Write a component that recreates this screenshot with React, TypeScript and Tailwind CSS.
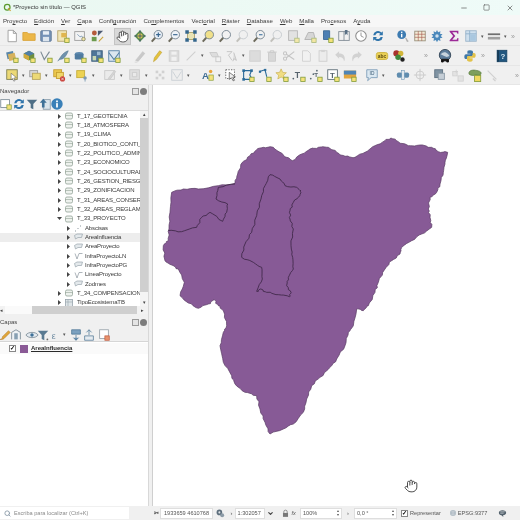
import { Hand, Minus, Square, X, Search, ChevronDown } from 'lucide-react'
import type { ReactNode } from 'react'

const font = "font-['Liberation_Sans',Arial,sans-serif]"

const badge = <rect x="10" y="10.5" width="5" height="5" fill="#f5e27a" stroke="#7f9a3a" strokeWidth=".9" />
const mag = (fill: string, inner?: ReactNode) => (
  <>
    <path d="M6 10 2 14.5" stroke="#6d6a5c" strokeWidth="2.2" />
    <circle cx="9.5" cy="6.5" r="4.8" fill={fill} stroke="#6f7f8c" strokeWidth="1" />
    {inner}
  </>
)

const icons: Record<string, ReactNode> = {
  page: <path d="M3.5 1.5h6l3.5 3.5v9.5h-9.5zM9.5 1.5V5H13" fill="#fff" stroke="#9a9a9a" />,
  open: <path d="M1 13V4h5l1.5 1.5H15V13z" fill="#ecb748" stroke="#d9a43a" />,
  save: (
    <>
      <rect x="2" y="2" width="12" height="12" rx="1" fill="#7693b8" stroke="#5f7796" />
      <rect x="4.5" y="2.5" width="7" height="4" fill="#e8eef5" />
      <rect x="4.5" y="9" width="7" height="5" fill="#dde5ee" />
    </>
  ),
  template: (
    <>
      <rect x="2" y="2" width="10" height="12" fill="#f1e6b8" stroke="#b5a36a" />
      <rect x="6" y="4.5" width="6" height="5" fill="#e0b64f" />
      {badge}
    </>
  ),
  layouts: (
    <>
      <rect x="2" y="3" width="11" height="10" fill="#f3f3f3" stroke="#9b9b9b" />
      <path d="M5 6l3 3 2-1 3 5" stroke="#7e9ab6" fill="none" />
      <circle cx="12" cy="11.5" r="2" fill="#f3e6a5" stroke="#8d8d70" />
    </>
  ),
  styles: (
    <>
      <circle cx="5" cy="4.5" r="2.8" fill="#b45a3c" />
      <rect x="2" y="9" width="5.5" height="5" fill="#6c9a4e" />
      <path d="M9 2h6L9 8z" fill="#4b5a72" />
      <path d="M9.5 14 14.5 8.5l1 1-5 5z" fill="#c8a33c" />
    </>
  ),
  panSel: (
    <>
      <path d="M8 1.5 14.5 8 8 14.5 1.5 8z" fill="#5c8f52" />
      <path d="M8 4 12 8 8 12 4 8z" fill="#e6cf4f" />
      <path d="M8 1.5v13M1.5 8h13" stroke="#35506b" strokeWidth="1" />
    </>
  ),
  zoomIn: mag('#e7eef6', <path d="M7 6.5h5M9.5 4v5" stroke="#37658f" strokeWidth="1.3" />),
  zoomOut: mag('#eef3f8', <path d="M7 6.5h5" stroke="#37658f" strokeWidth="1.3" />),
  zoomFull: (
    <>
      <rect x="4" y="4" width="8" height="8" fill="#e8e3b5" stroke="#a9a06a" />
      <path d="M1.5 1.5h4v4h-4zM10.5 1.5h4v4h-4zM1.5 10.5h4v4h-4zM10.5 10.5h4v4h-4z" fill="#34668c" />
    </>
  ),
  zoomLayer: mag('#f0e08a'),
  zoomSel: mag('#f2f2f2'),
  zoomOff: <g opacity=".35">{mag('#f2f2f2')}</g>,
  zoomLast: mag('#f0f0f0', <path d="M8 6.5h4" stroke="#5a87ad" strokeWidth="1.5" />),
  newMapOff: (
    <g opacity=".6">
      <rect x="3" y="2" width="10" height="11" fill="#d9d9d9" stroke="#8e8e8e" />
      {badge}
    </g>
  ),
  newMapOff2: (
    <g opacity=".65">
      <path d="M2 12 6 4h6l2 8z" fill="#c9c9c9" stroke="#8e8e8e" />
      {badge}
    </g>
  ),
  bookmark: (
    <>
      <path d="M4 2h7v10H4z" fill="#4d7fb3" stroke="#3c6893" />
      {badge}
    </>
  ),
  bookmarks: (
    <>
      <rect x="2" y="3" width="12" height="10" fill="#f2f2f2" stroke="#7f8a94" />
      <path d="M8 3v10" stroke="#7f8a94" />
      <path d="M9 1h3v6l-1.5-1.5L9 7z" fill="#5a7186" />
    </>
  ),
  clock: (
    <>
      <circle cx="8" cy="8" r="6" fill="#fff" stroke="#8c8c8c" strokeWidth="1.2" />
      <path d="M8 4v4l3 1.5" stroke="#8c8c8c" fill="none" />
    </>
  ),
  refresh: (
    <>
      <path d="M2.5 7A5.5 5.5 0 0 1 12 4l1.5-1.5V7H9l1.7-1.7A3.6 3.6 0 0 0 5 7z" fill="#2f74ab" />
      <path d="M13.5 9A5.5 5.5 0 0 1 4 12l-1.5 1.5V9H7l-1.7 1.7A3.6 3.6 0 0 0 11 9z" fill="#2f74ab" />
    </>
  ),
  identify: (
    <>
      <circle cx="6.5" cy="6.5" r="5" fill="#3d7bb1" />
      <rect x="5.7" y="5.5" width="1.6" height="4" fill="#fff" />
      <rect x="5.7" y="3" width="1.6" height="1.5" fill="#fff" />
      <path d="M11 10l3 4-1.5.3z" fill="#c8c8c8" stroke="#8c8c8c" strokeWidth=".5" />
    </>
  ),
  table: (
    <>
      <rect x="2" y="2.5" width="12" height="11" fill="#f2ecd8" stroke="#98907a" />
      <path d="M2 6h12M2 9.5h12M6 2.5v11M10 2.5v11" stroke="#a5564a" strokeWidth=".7" />
    </>
  ),
  gear: (
    <>
      <path d="M8 1l1.3 2.6 2.7-1-.6 2.9 2.9.6-1.9 2 1.9 2-2.9.6.6 2.9-2.7-1L8 15l-1.3-2.4-2.7 1 .6-2.9-2.9-.6 1.9-2-1.9-2 2.9-.6-.6-2.9 2.7 1z" fill="#4a88bb" />
      <circle cx="8" cy="8" r="2" fill="#cfe0ee" />
    </>
  ),
  sigma: <path d="M3 2h10v3.5h-1L11 3.6H6L9.5 8 6 12.4h5l1-2h1V14H3v-1.2L7 8 3 3.2z" fill="#9c2a97" />,
  attr: (
    <>
      <rect x="2" y="2" width="12" height="12" fill="#cfe0ee" stroke="#9ab4c9" />
      <path d="M2 5.5h12M6.5 2v12" stroke="#8fb0cb" />
      <rect x="7" y="6" width="6.5" height="7.5" fill="#a9c7df" />
    </>
  ),
  measure: (
    <>
      <rect x="1" y="5" width="14" height="2" fill="#6f6f6f" />
      <rect x="1" y="9" width="14" height="3" fill="#a0a0a0" />
    </>
  ),
  dsManager: (
    <>
      <rect x="2" y="3" width="8" height="8" fill="#5a86a8" transform="rotate(-12 6 7)" />
      <rect x="4" y="5" width="8" height="8" fill="#d6b25d" transform="rotate(-12 8 9)" />
      {badge}
    </>
  ),
  gpkg: (
    <>
      <path d="M8 2 14 5v5l-6 3-6-3V5z" fill="#6f8f3e" />
      <path d="M8 2 14 5 8 8 2 5z" fill="#4f7ea8" />
      <path d="M2 5l6 3v5l-6-3z" fill="#d0a93c" />
      {badge}
    </>
  ),
  vectorNew: (
    <>
      <path d="M2 3 6 12 12 3" fill="none" stroke="#7d8c95" strokeWidth="1.3" />
      {badge}
    </>
  ),
  feather: (
    <>
      <path d="M2 14 6 8c2-3 5-5 8-6-1 3-3 7-6 9l-3 1" fill="#6f92ad" stroke="#4e7189" strokeWidth=".6" />
      {badge}
    </>
  ),
  stack: (
    <>
      <ellipse cx="7" cy="6" rx="5" ry="2.5" fill="#5d88ad" />
      <path d="M2 6v5c0 1.5 10 1.5 10 0V6" fill="#4f7a9f" />
      {badge}
    </>
  ),
  grid: (
    <>
      <rect x="2" y="2" width="12" height="12" fill="#4f7698" stroke="#3d5f7d" />
      <rect x="3" y="8" width="4" height="5" fill="#c8d7b2" />
      <rect x="8" y="3" width="4" height="4" fill="#9dbad0" />
      {badge}
    </>
  ),
  mesh: (
    <>
      <rect x="2" y="2" width="12" height="12" fill="#dbe6ef" stroke="#537fa3" />
      <path d="M2 4 8 12 14 4" stroke="#537fa3" fill="none" strokeWidth="1.2" />
      {badge}
    </>
  ),
  penOff: <path d="M3 13 11 3l2.5 2L6 14z M2 15h3" fill="#c9c9c9" stroke="#bdbdbd" strokeWidth=".6" />,
  pen: <path d="M4 14.5 5 10l6-8 2.5 1.8-6 8z" fill="#e4c23c" stroke="#b99a2e" strokeWidth=".6" />,
  saveOff: (
    <g opacity=".4">
      <rect x="2.5" y="2" width="11" height="12" fill="#bdbdbd" stroke="#9c9c9c" />
      <rect x="5" y="3" width="6" height="3.5" fill="#f3f3f3" />
      <rect x="5" y="9" width="6" height="4.5" fill="#f3f3f3" />
    </g>
  ),
  lineOff: <path d="M3 13 13 3" stroke="#cfcfcf" strokeWidth="1.2" />,
  polyOff: (
    <g opacity=".55">
      <path d="M2 4h8l2 5H5z" fill="#cfcfcf" stroke="#a8a8a8" />
      <rect x="9" y="9" width="5.5" height="5.5" fill="#f4f4f4" stroke="#a8a8a8" />
    </g>
  ),
  nodeOff: (
    <g stroke="#bdbdbd" fill="none" opacity=".9">
      <path d="M2 3h6l-4 4 4 6" />
      <path d="M10 4l3 9-3-2-1 3" fill="#ddd" />
    </g>
  ),
  blockOff: <rect x="2" y="2" width="12" height="12" fill="#dcdcdc" stroke="#cfcfcf" />,
  trash: (
    <g opacity=".45">
      <path d="M2.5 3.5h11M6 3.5V2h4v1.5" stroke="#9c9c9c" fill="none" />
      <path d="M4 4h8v10H4z" fill="#bcbcbc" stroke="#9c9c9c" />
    </g>
  ),
  cut: (
    <g stroke="#c4c4c4" fill="none" strokeWidth="1.2">
      <path d="M14 3 5 10M14 12 5 6" />
      <circle cx="3.5" cy="5" r="1.8" />
      <circle cx="3.5" cy="11" r="1.8" />
    </g>
  ),
  copy: <path d="M4 2h6l3 3v9H4z" fill="#f1f1f1" stroke="#cfcfcf" />,
  paste: (
    <>
      <rect x="3.5" y="2" width="9" height="12" fill="#ececec" stroke="#cdcdcd" />
      <rect x="6" y="1" width="4" height="2.5" fill="#d4d4d4" />
    </>
  ),
  undo: <path d="M2.5 6.5 7 2.5V5c4 0 6.5 2 6.5 6 0 1.5-.5 2.5-1 3 0-3-2-5-5.5-5v2z" fill="#d2d2d2" />,
  redo: <path d="M13.5 6.5 9 2.5V5C5 5 2.5 7 2.5 11c0 1.5.5 2.5 1 3 0-3 2-5 5.5-5v2z" fill="#d2d2d2" />,
  abc: (
    <>
      <rect x="1.5" y="4" width="13" height="8" rx="2.5" fill="#e9cf55" stroke="#cdb23e" />
      <text x="8" y="10" textAnchor="middle" fontSize="5.5" fontWeight="700" fill="#5b4b12">abc</text>
    </>
  ),
  tag: (
    <>
      <circle cx="5" cy="5" r="3.5" fill="#a8322d" />
      <circle cx="10" cy="5" r="3" fill="#d2b63a" />
      <circle cx="7" cy="9.5" r="3.2" fill="#3f8a3c" />
      <circle cx="12" cy="12" r="2.5" fill="#222" />
    </>
  ),
  globe: (
    <>
      <circle cx="8" cy="7" r="6.5" fill="#5d7d9b" stroke="#2d3f50" />
      <path d="M3 6c2-2 4-3 6-2s3 2 4 4l-3 1-3-1z" fill="#c7d3dc" />
      <rect x="3.5" y="11" width="9" height="3" rx="1" fill="#1d1d1d" />
      <circle cx="5" cy="14" r="1.5" fill="#111" />
      <circle cx="11" cy="14" r="1.5" fill="#111" />
    </>
  ),
  python: (
    <>
      <path d="M8 1.5c-3 0-3 1-3 2.5v1.5h3.5V6H3.5C2 6 1.5 7.5 1.5 9s.7 2.5 2 2.5H5V9.5C5 8.5 5.8 8 6.700 8h3c1 0 1.800-.7 1.800-1.800V4c0-1.500-1-2.500-3.500-2.500z" fill="#3f77a8" />
      <path d="M8 14.5c3 0 3-1 3-2.5v-1.5H7.5V10h5c1.5 0 2-1.5 2-3s-.7-2.500-2-2.500H11v2c0 1-.8 1.500-1.700 1.500h-3c-1 0-1.800.7-1.800 1.800V12c0 1.500 1 2.500 3.500 2.500z" fill="#e2c24a" />
    </>
  ),
  help: (
    <>
      <rect x="2.5" y="1.5" width="11" height="13" fill="#21567f" stroke="#1b4667" />
      <rect x="2.5" y="1.5" width="2" height="13" fill="#163a55" />
      <text x="9" y="11" textAnchor="middle" fontSize="9" fontWeight="700" fill="#d7e7f2">?</text>
    </>
  ),
  selRect: (
    <>
      <rect x="2" y="2" width="12" height="11" fill="#ecd976" stroke="#7f7f4f" />
      <path d="M7 6l6 5-3 .5 1.5 3-1.5.5-1.5-3L7 13.5z" fill="#fff" stroke="#555" strokeWidth=".6" />
    </>
  ),
  selAll: (
    <>
      <rect x="2" y="3" width="9" height="7" fill="#d8d8d8" stroke="#9a9a9a" />
      <rect x="5" y="6" width="9" height="7" fill="#ecd976" stroke="#b7a45a" />
    </>
  ),
  selClear: (
    <>
      <rect x="2" y="2" width="9" height="8" fill="#ecc94f" stroke="#c49c2d" />
      <rect x="5" y="5" width="8" height="7" fill="#f0d76a" stroke="#c49c2d" />
      <circle cx="12" cy="12.5" r="3" fill="#c9413b" />
      <path d="M10.5 11l3 3M13.5 11l-3 3" stroke="#fff" strokeWidth=".7" />
    </>
  ),
  selPin: (
    <>
      <rect x="2" y="3" width="9" height="8" fill="#ecd253" stroke="#c5ac38" />
      <circle cx="11.5" cy="11.5" r="2" fill="#7d9ab3" />
      <path d="M11.5 13v2.5" stroke="#7d9ab3" />
    </>
  ),
  digOff: (
    <g opacity=".5" stroke="#a5a5a5" fill="#e8e8e8">
      <rect x="2" y="3" width="11" height="10" />
      <path d="M6 12 13 3l1.5 1L8 13z" fill="#bdbdbd" />
    </g>
  ),
  digOff2: (
    <g opacity=".5" stroke="#a5a5a5" fill="#cfcfcf">
      <rect x="2" y="2" width="11" height="11" />
      <path d="M5 5h5v5H5z" fill="#e6e6e6" />
    </g>
  ),
  digOff3: (
    <g opacity=".55" fill="#b8b8b8">
      <rect x="3" y="3" width="3" height="3" />
      <rect x="10" y="3" width="3" height="3" />
      <rect x="3" y="10" width="3" height="3" />
      <rect x="10" y="10" width="3" height="3" />
      <rect x="6.5" y="6.5" width="3" height="3" />
    </g>
  ),
  digOff4: (
    <g opacity=".55">
      <rect x="2" y="2" width="12" height="12" fill="#ededed" stroke="#a8b4bd" />
      <path d="M3 4l5 8 5-8" fill="none" stroke="#a8b4bd" />
    </g>
  ),
  labelA: (
    <>
      <text x="1" y="13" fontSize="11" fontWeight="700" fill="#3f6d94">A</text>
      <circle cx="11" cy="4" r="2" fill="#e9a43c" />
      <rect x="9" y="8" width="5" height="6" fill="#f5e27a" stroke="#8aa03c" strokeWidth=".8" />
    </>
  ),
  arrowSel: (
    <>
      <rect x="2" y="2" width="10" height="10" fill="#fff" stroke="#555" strokeDasharray="1.5 1.5" />
      <path d="M6 5l7 5-3 .5 2 3.5-1.5.7-2-3.5L6 13z" fill="#eee" stroke="#333" strokeWidth=".7" />
    </>
  ),
  polyNode: (
    <>
      <path d="M3 3h9L10 8l3 5H3z" fill="none" stroke="#2c6b9a" strokeWidth="1.3" />
      <rect x="1.5" y="1.5" width="3" height="3" fill="#2c6b9a" />
      <rect x="10.5" y="1.5" width="3" height="3" fill="#2c6b9a" />
      <rect x="1.5" y="11.5" width="3" height="3" fill="#2c6b9a" />
      {badge}
    </>
  ),
  lineNode: (
    <>
      <path d="M2 4l6-2 2 8" fill="none" stroke="#2c6b9a" strokeWidth="1.2" />
      <rect x="1" y="3" width="2.5" height="2.5" fill="#2c6b9a" />
      <rect x="7" y="1" width="2.5" height="2.5" fill="#2c6b9a" />
      {badge}
    </>
  ),
  star: (
    <>
      <path d="M7 1l1.800 4 4.200.4-3.200 2.900 1 4.200L7 10.300l-3.800 2.200 1-4.200L1 5.400 5.200 5z" fill="#f0dd84" stroke="#c6a945" strokeWidth=".7" />
      {badge}
    </>
  ),
  textT: (
    <>
      <text x="3" y="11" fontSize="10" fontWeight="700" fill="#56636d">T</text>
      <circle cx="1.5" cy="12" r="1" fill="#56636d" />
      {badge}
    </>
  ),
  dotsT: (
    <>
      <circle cx="2" cy="12" r="1" fill="#5a6a74" />
      <circle cx="5" cy="7" r="1" fill="#5a6a74" />
      <circle cx="9" cy="3" r="1" fill="#5a6a74" />
      <text x="6" y="10" fontSize="7" fontWeight="700" fill="#56636d">T</text>
      {badge}
    </>
  ),
  textBox: (
    <>
      <rect x="2" y="2" width="11" height="11" fill="#fff" stroke="#5a6a74" />
      <text x="4.5" y="11" fontSize="9" fontWeight="700" fill="#56636d">T</text>
      {badge}
    </>
  ),
  image: (
    <>
      <rect x="1" y="3" width="14" height="9" fill="#e3a53d" />
      <rect x="1" y="3" width="14" height="4.5" fill="#4f85b5" />
      {badge}
    </>
  ),
  bubble: (
    <>
      <path d="M2 2h12v9H7l-4 3.5 1-3.500H2z" fill="#dbe8f1" stroke="#7b9db8" />
      <text x="8" y="8.5" textAnchor="middle" fontSize="5.5" fill="#3a5a75">ID</text>
    </>
  ),
  chip: (
    <>
      <rect x="1" y="5" width="6" height="6" rx="2" fill="#5f8cae" />
      <rect x="9" y="5" width="6" height="6" rx="2" fill="#5f8cae" />
      <rect x="6.5" y="3" width="3" height="10" fill="#dfe8ee" stroke="#5f8cae" strokeWidth=".6" />
    </>
  ),
  crossOff: (
    <g stroke="#c9c9c9" fill="none">
      <circle cx="8" cy="8" r="4.5" />
      <path d="M8 1v14M1 8h14" />
    </g>
  ),
  sel3d: (
    <>
      <rect x="2" y="2" width="9" height="9" fill="#7f93a3" stroke="#5c6f7f" />
      <rect x="6" y="6" width="7" height="7" fill="#c5ced6" stroke="#8b9aa6" />
    </>
  ),
  cloneOff: (
    <g opacity=".5" fill="#d8d8d8" stroke="#b5b5b5">
      <rect x="2" y="4" width="5" height="5" />
      <rect x="8" y="9" width="6" height="6" />
      <path d="M6 2v4M4 4h4" fill="none" />
    </g>
  ),
  blob: (
    <>
      <path d="M1 6c0-3 4-4 7-3.500s7 1 7 3.500-3 2.500-5 2-3 1-5 .5-4-.5-4-2.500z" fill="#7d9f5c" stroke="#4f7434" strokeWidth=".7" />
      <rect x="7.5" y="8.5" width="7" height="7" fill="#f0d85e" stroke="#8aa03c" />
    </>
  ),
  wandOff: <path d="M3 3l10 10M9 12l3 3" stroke="#d0d0d0" strokeWidth="1.5" />,
  navNew: (
    <>
      <rect x="2" y="3" width="10" height="9" fill="#fff" stroke="#7d8d98" />
      <rect x="9" y="9" width="5" height="5" fill="#f5e27a" stroke="#7f9a3a" strokeWidth=".8" />
    </>
  ),
  filter: <path d="M2 3h12L9.500 8v6l-3-1.500V8z" fill="#4f6f87" />,
  upDoc: (
    <>
      <rect x="6" y="3" width="8" height="11" fill="#dbe5ec" stroke="#8a9cab" />
      <path d="M6 2 2 6.500h2.500V12h3V6.500H10z" fill="#3f7198" />
    </>
  ),
  info: (
    <>
      <circle cx="8" cy="8" r="6.5" fill="#3a80b8" />
      <rect x="7" y="7" width="2" height="5" fill="#fff" />
      <rect x="7" y="4" width="2" height="2" fill="#fff" />
    </>
  ),
  brush: <path d="M2 13c2 0 3-1 3-3l7-7 2 2-7 7c-1 1-3 1.500-5 1z" fill="#dfa53a" stroke="#a66f1d" strokeWidth=".5" />,
  eye: (
    <>
      <path d="M3 13V5l5-3 5 3v8" fill="#eef2f5" stroke="#7d8d98" />
      <rect x="6" y="6" width="4" height="7" fill="#87a0b3" />
    </>
  ),
  sym: (
    <>
      <path d="M1 8c3-4 11-4 14 0-3 4-11 4-14 0z" fill="#e3eaf0" stroke="#7d8d98" />
      <circle cx="8" cy="8" r="2" fill="#3f7198" />
    </>
  ),
  funnel: (
    <>
      <path d="M2 3h12L9.500 8v6l-3-1.500V8z" fill="#597a92" />
      <circle cx="13" cy="13" r="1" fill="#666" />
    </>
  ),
  eps: <text x="2" y="12" fontSize="10" fill="#6d8aa0">ε</text>,
  expand: <path d="M3 2h10v5H3zM8 8v6M5 11l3 3 3-3" fill="#7ba1c0" stroke="#46708f" strokeWidth=".8" />,
  collapse: <path d="M3 9h10v5H3zM8 8V2M5 5l3-3 3 3" fill="#e5ebf0" stroke="#46708f" strokeWidth=".8" />,
  remove: (
    <>
      <rect x="3" y="2" width="10" height="10" fill="#fff" stroke="#9aa4ac" />
      <rect x="9" y="9" width="5" height="5" fill="#e7936e" stroke="#c0563a" strokeWidth=".8" />
    </>
  ),
  mouse: (
    <>
      <circle cx="6" cy="6" r="5" fill="#5e6f7d" />
      <circle cx="11" cy="11" r="3.5" fill="#8c9ba7" />
      <circle cx="6" cy="6" r="1.8" fill="#dfe4e8" />
    </>
  ),
  lock: (
    <>
      <path d="M5 7V5a3 3 0 0 1 6 0v2" fill="none" stroke="#7c7c7c" strokeWidth="1.5" />
      <rect x="3.5" y="7" width="9" height="7" fill="#777" />
    </>
  ),
  srs: (
    <>
      <circle cx="8" cy="8" r="6" fill="#a9b6c0" />
      <path d="M2 8h12M8 2v12M4 4c3 2 5 2 8 0M4 12c3-2 5-2 8 0" stroke="#f0f0f0" fill="none" strokeWidth=".6" />
    </>
  ),
  chat: (
    <>
      <path d="M8 2c4 0 6.500 2 6.500 4.500S12 11 9 11l.5 3-3.500-3C3.500 10.500 1.500 9 1.500 6.500S4 2 8 2z" fill="#54626d" />
      <path d="M4 5h8M4 7.500h6" stroke="#e7ebee" />
    </>
  ),
  q: (
    <>
      <circle cx="7.5" cy="7.5" r="5" fill="none" stroke="#5b9a2e" strokeWidth="2.2" />
      <path d="M9 9l4.500 5" stroke="#cfa13a" strokeWidth="2.2" />
    </>
  ),
}

function Svg({ n, size = 14 }: { n: string; size?: number }) {
  return (
    <svg width={size} height={size} viewBox="0 0 16 16" className="shrink-0">
      {icons[n]}
    </svg>
  )
}

function I({ n }: { n: string }) {
  return (
    <span className="w-[17px] h-[17px] shrink-0 flex items-center justify-center">
      <Svg n={n} />
    </span>
  )
}

function Arrow() {
  return <span className="w-[6px] shrink-0 text-center text-[5px] leading-none text-[#555]">▾</span>
}

function More() {
  return <span className="w-[9px] shrink-0 text-center text-[7px] leading-none text-[#999]">»</span>
}

function Bar({ children, h }: { children: ReactNode; h: string }) {
  return <div className={`flex items-center pl-[3.5px] border-b border-[#e6e6e6] ${h}`}>{children}</div>
}

const menus: [string, string, string][] = [
  ['Pro', 'y', 'ecto'],
  ['', 'E', 'dición'],
  ['', 'V', 'er'],
  ['', 'C', 'apa'],
  ['Confi', 'g', 'uración'],
  ['Co', 'm', 'plementos'],
  ['Vect', 'o', 'rial'],
  ['', 'R', 'áster'],
  ['', 'D', 'atabase'],
  ['', 'W', 'eb'],
  ['', 'M', 'alla'],
  ['Pro', 'c', 'esos'],
  ['A', 'y', 'uda'],
]

const catalog = [
  'T_17_GEOTECNIA',
  'T_18_ATMOSFERA',
  'T_19_CLIMA',
  'T_20_BIOTICO_CONTI_C',
  'T_22_POLITICO_ADMIN',
  'T_23_ECONOMICO',
  'T_24_SOCIOCULTURAL',
  'T_26_GESTION_RIESGO',
  'T_29_ZONIFICACION',
  'T_31_AREAS_CONSER_P',
  'T_32_AREAS_REGLAMEN',
]

const layers = [
  { name: 'Abscisas', kind: 'dots' },
  { name: 'AreaInfluencia', kind: 'poly', active: true },
  { name: 'AreaProyecto', kind: 'poly' },
  { name: 'InfraProyectoLN', kind: 'line' },
  { name: 'InfraProyectoPG', kind: 'poly' },
  { name: 'LineaProyecto', kind: 'line' },
  { name: 'Zodmes', kind: 'poly' },
]

function Cylinder() {
  return (
    <svg width="8" height="8" viewBox="0 0 8 8" className="shrink-0">
      <rect x=".5" y="1" width="7" height="6" rx="1.5" fill="#eef2ee" stroke="#93a297" strokeWidth=".8" />
      <path d="M.5 3.500h7" stroke="#93a297" strokeWidth=".6" />
    </svg>
  )
}

function LayerGlyph({ kind }: { kind: string }) {
  return (
    <svg width="9" height="8" viewBox="0 0 9 8" className="shrink-0">
      {kind === 'poly' && <path d="M.5 2.500 3 1h5.500l-1 3.500H4L1.500 6z" fill="#e4e9ec" stroke="#9aa5ad" strokeWidth=".7" />}
      {kind === 'line' && <path d="M1 1.500 3 7 5 1.500h3.500" fill="none" stroke="#8c979f" strokeWidth=".7" />}
      {kind === 'dots' && <path d="M1 7h1M3.500 4.500h1M6 2h1" stroke="#8c979f" strokeWidth="1" />}
    </svg>
  )
}

function Tri({ down }: { down?: boolean }) {
  return (
    <span className="w-[10px] shrink-0 flex justify-center">
      <svg width="5" height="5" viewBox="0 0 5 5">
        {down ? <path d="M0 1h5L2.5 4z" fill="#444" /> : <path d="M1 0l3 2.500L1 5z" fill="#444" />}
      </svg>
    </span>
  )
}

function TreeRow({ children, active, indent }: { children: ReactNode; active?: boolean; indent: string }) {
  return (
    <div className={`h-[9.33px] flex items-center whitespace-nowrap text-[6px] tracking-[-0.15px] text-[#3a3a3a] ${indent} ${active ? 'bg-[#ededed]' : ''}`}>
      {children}
    </div>
  )
}

function DockHeader({ title }: { title: string }) {
  return (
    <div className="h-[12px] flex items-center justify-between pr-[1px] text-[6px] text-[#444]">
      <span>{title}</span>
      <span className="flex gap-[1px]">
        <span className="w-[7px] h-[7px] border border-[#9a9a9a] bg-[#e4e4e4]" />
        <span className="w-[7px] h-[7px] rounded-full bg-[#7d7d7d]" />
      </span>
    </div>
  )
}

function Browser() {
  return (
    <div className="h-[229px] flex flex-col shrink-0">
      <DockHeader title="Navegador" />
      <div className="h-[13px] flex items-center overflow-hidden">
        <span className="-ml-[3px] flex items-center"><I n="navNew" /></span>
        <span className="-ml-[4px] flex items-center"><I n="refresh" /></span>
        <span className="-ml-[4px] flex items-center"><I n="filter" /></span>
        <span className="-ml-[4px] flex items-center"><I n="upDoc" /></span>
        <span className="-ml-[5px] flex items-center"><I n="info" /></span>
      </div>
      <div className="flex-1 min-h-0 flex flex-col bg-white border-t border-[#dcdcdc]">
        <div className="flex-1 min-h-0 flex">
          <div className="flex-1 min-w-0 overflow-hidden pt-[0.5px]">
            {catalog.map(name => (
              <TreeRow key={name} indent="pl-[54px]">
                <Tri />
                <span className="mr-[4px] ml-[1px]"><Cylinder /></span>
                {name}
              </TreeRow>
            ))}
            <TreeRow indent="pl-[54px]">
              <Tri down />
              <span className="mr-[4px] ml-[1px]"><Cylinder /></span>
              T_33_PROYECTO
            </TreeRow>
            {layers.map(l => (
              <TreeRow key={l.name} active={l.active} indent="pl-[63px]">
                <Tri />
                <span className="mr-[2px] ml-[1px]"><LayerGlyph kind={l.kind} /></span>
                {l.name}
              </TreeRow>
            ))}
            <TreeRow indent="pl-[54px]">
              <Tri />
              <span className="mr-[4px] ml-[1px]"><Cylinder /></span>
              T_34_COMPENSACION
            </TreeRow>
            <TreeRow indent="pl-[54px]">
              <Tri />
              <svg width="8" height="8" viewBox="0 0 8 8" className="ml-[1px] mr-[4px] shrink-0">
                <rect x=".5" y=".5" width="7" height="7" fill="#dfe5e8" stroke="#98a4ac" strokeWidth=".8" />
                <path d="M.5 3h7M3 .5v7" stroke="#98a4ac" strokeWidth=".6" />
              </svg>
              TipoEcosistemaTB
            </TreeRow>
          </div>
          <div className="w-[8px] shrink-0 flex flex-col bg-[#f4f4f4]">
            <span className="h-[7px] text-[5px] leading-[7px] text-center text-[#444]">▴</span>
            <div className="flex-1 bg-[#cfcfcf]" />
            <div className="h-[7px] bg-[#f4f4f4]" />
            <span className="h-[7px] text-[5px] leading-[7px] text-center text-[#444]">▾</span>
          </div>
        </div>
        <div className="h-[8px] shrink-0 flex items-center bg-[#f2f2f2]">
          <span className="w-[5px] text-[5px] leading-[8px] text-[#444]">◂</span>
          <div className="w-[27px] h-full bg-[#fafafa]" />
          <div className="flex-1 h-full bg-[#cfcfcf]" />
          <span className="w-[11px] text-[5px] leading-[8px] text-center text-[#444]">▸</span>
        </div>
      </div>
    </div>
  )
}

function LayersPanel() {
  return (
    <div className="flex-1 min-h-0 flex flex-col mt-[2px]">
      <DockHeader title="Capas" />
      <div className="h-[13px] flex items-center overflow-hidden">
        <span className="-ml-[4px] flex"><I n="brush" /></span>
        <span className="-ml-[6px] flex"><I n="eye" /></span>
        <span className="-ml-[1px] flex"><I n="sym" /></span>
        <span className="-ml-[6px] flex"><I n="funnel" /></span>
        <span className="-ml-[3px] flex"><I n="eps" /></span>
        <span className="-ml-[4px] flex items-center"><Arrow /></span>
        <span className="flex"><I n="expand" /></span>
        <span className="-ml-[4px] flex"><I n="collapse" /></span>
        <span className="-ml-[2px] flex"><I n="remove" /></span>
      </div>
      <div className="flex-1 bg-white border-t border-[#d6d6d6] pt-[1px]">
        <div className="h-[11px] flex items-center pl-[9px] bg-[#fafafa]">
          <span className="w-[7px] h-[7px] border border-[#888] bg-white text-[6px] leading-[5px] text-center text-black font-bold">✓</span>
          <span className="ml-[4px] w-[8px] h-[8px] bg-[#8a5a96]" />
          <span className="ml-[3px] text-[6px] font-bold underline text-[#2b2b2b]">AreaInfluencia</span>
        </div>
      </div>
    </div>
  )
}

// silueta del área de influencia, en coordenadas de 900x930
const outline = [
  [50, 190], [85, 180], [130, 180], [190, 170], [240, 163], [248, 135], [262, 100], [285, 80], [305, 62], [325, 55], [355, 55], [375, 70], [395, 85], [412, 95], [440, 75], [465, 60], [490, 55], [520, 55], [545, 70], [570, 82], [600, 85], [630, 70], [660, 50], [690, 35], [708, 27], [730, 38], [760, 50], [795, 48], [830, 55], [850, 68], [878, 70], [870, 100], [865, 130], [855, 165], [845, 190], [825, 205], [820, 240], [825, 265], [830, 295], [800, 315], [770, 335], [740, 355], [735, 375], [710, 395], [690, 420], [670, 460], [660, 490], [640, 530], [625, 545], [605, 540], [595, 590], [580, 610], [570, 650], [545, 690], [525, 715], [495, 745], [470, 770], [455, 810], [445, 850], [415, 885], [385, 900], [345, 915], [330, 880], [315, 840], [305, 800], [270, 790], [240, 765], [230, 740], [205, 700], [195, 650], [205, 610], [215, 590], [205, 545], [190, 530], [178, 512], [160, 525], [130, 538], [100, 522], [75, 500], [88, 460], [70, 420], [50, 408], [30, 395], [25, 350], [40, 335], [42, 300], [45, 250],
]
const project = [
  [345, 137], [375, 150], [390, 170], [425, 175], [438, 185], [435, 200], [415, 220], [405, 245], [405, 270], [415, 300], [408, 350], [413, 385], [415, 420], [400, 445], [395, 470], [408, 490], [403, 503], [370, 497], [335, 490], [318, 480], [305, 487], [322, 450], [320, 415], [295, 400], [260, 385], [270, 345], [290, 310], [305, 260], [318, 210], [330, 170],
]
const west = [
  [240, 165], [190, 175], [183, 210], [218, 225], [215, 250], [203, 277], [165, 250], [140, 265], [125, 295], [80, 308], [40, 305],
]

// añade un poco de ruido para que el borde no quede liso
function rough(pts: number[][], closed: boolean) {
  let d = ''
  const n = closed ? pts.length : pts.length - 1
  for (let i = 0; i < n; i++) {
    const [x, y] = pts[i]
    const [x2, y2] = pts[(i + 1) % pts.length]
    d += `${i ? 'L' : 'M'}${x} ${y}`
    for (let k = 1; k < 4; k++) {
      const t = k / 4
      const jx = Math.sin(i * 12.9 + k * 78.2) * 2
      const jy = Math.sin(i * 39.3 + k * 17.7) * 2
      d += `L${(x + (x2 - x) * t + jx).toFixed(1)} ${(y + (y2 - y) * t + jy).toFixed(1)}`
    }
  }
  if (closed) return d + 'Z'
  const last = pts[pts.length - 1]
  return d + `L${last[0]} ${last[1]}`
}

function MapCanvas() {
  return (
    <div className="relative flex-1 bg-white border-l border-[#cfcfcf] pl-[1.5px] pt-[44px]">
      <svg width="300" height="310" viewBox="0 0 900 930">
        <path d={rough(outline, true)} fill="#875a96" stroke="#5a3d66" strokeWidth="2.2" />
        <path d={rough(project, true)} fill="none" stroke="#3f2748" strokeWidth="2.6" />
        <path d={rough(west, false)} fill="none" stroke="#3f2748" strokeWidth="2.6" />
      </svg>
      <Hand className="absolute left-[251px] top-[394px] w-[14px] h-[14px] text-[#333]" fill="#fff" strokeWidth={1.5} />
    </div>
  )
}

function Field({ children, w }: { children: ReactNode; w: string }) {
  return <span className={`h-[11px] shrink-0 flex items-center bg-white border border-[#dedede] px-[2px] text-[5.6px] text-[#555] whitespace-nowrap ${w}`}>{children}</span>
}

function Spin() {
  return <span className="ml-auto text-[4px] leading-[4px] text-[#555] text-center">▴<br />▾</span>
}

function StatusBar() {
  return (
    <div className="h-[14px] shrink-0 flex items-center bg-[#f0f0f0] text-[5.6px] text-[#555] whitespace-nowrap">
      <span className="w-[129px] shrink-0 h-[12px] flex items-center gap-[3px] bg-white pl-[4px] text-[#8a8a8a]">
        <Search className="w-[7px] h-[7px] text-[#8a9aa8]" strokeWidth={3} />
        Escriba para localizar (Ctrl+K)
      </span>
      <span className="ml-[24px] w-[6px] shrink-0 text-center text-[6px] font-bold text-[#444]">✂</span>
      <Field w="ml-[1px] w-[53px] justify-center">1933659 4610768</Field>
      <span className="ml-[2.5px] flex"><Svg n="mouse" size={9} /></span>
      <span className="ml-[4px] w-[6px] shrink-0 text-center">›</span>
      <Field w="w-[30px]">1:302057</Field>
      <ChevronDown className="w-[7px] h-[7px] ml-[2px] shrink-0 text-[#444]" strokeWidth={4} />
      <span className="ml-[7px] flex"><Svg n="lock" size={9} /></span>
      <span className="ml-[2px] w-[7px] shrink-0 italic">fx</span>
      <Field w="ml-[1.5px] w-[42px]">100%<Spin /></Field>
      <span className="w-[12px] shrink-0 text-center">›</span>
      <Field w="w-[43px]">0,0 °<Spin /></Field>
      <span className="ml-[3.5px] w-[7px] h-[7px] shrink-0 border border-[#888] bg-white text-[6px] leading-[5px] text-center text-black font-bold">✓</span>
      <span className="ml-[2.5px]">Representar</span>
      <span className="ml-[8px] flex"><Svg n="srs" size={8} /></span>
      <span className="ml-[1px]">EPSG:9377</span>
      <span className="ml-[10.5px] flex"><Svg n="chat" size={9} /></span>
    </div>
  )
}

export default function App() {
  return (
    <div className={`w-[520px] h-[520px] overflow-hidden flex flex-col bg-[#f0f0f0] blur-[0.4px] ${font}`}>
      <div className="h-[15px] shrink-0 flex items-center bg-gradient-to-r from-[#eaf8f1] to-[#effbf8] text-[5.9px] text-[#333]">
        <span className="ml-[3px] flex"><Svg n="q" size={9} /></span>
        <span className="ml-[1px]">*Proyecto sin título — QGIS</span>
        <span className="ml-auto flex items-center text-[#555]">
          <Minus className="w-[8px] h-[8px]" />
          <Square className="w-[7px] h-[7px] ml-[15px]" />
          <X className="w-[8px] h-[8px] ml-[16px] mr-[6px]" />
        </span>
      </div>
      <div className="h-[12px] shrink-0 flex items-center gap-[7px] pl-[3px] bg-[#f7f7f7] text-[6.1px] text-[#3c3c3c]">
        {menus.map(([a, b, c]) => (
          <span key={a + b + c} className="whitespace-nowrap">
            {a}
            <span className="underline">{b}</span>
            {c}
          </span>
        ))}
      </div>

      <Bar h="h-[19px]">
        <I n="page" /><I n="open" /><I n="save" /><I n="template" /><I n="layouts" /><I n="styles" />
        <div className="w-[8px] shrink-0" />
        <span className="w-[17px] h-[17px] shrink-0 flex items-center justify-center bg-[#d9d9d9] border border-[#c4c4c4]">
          <Hand className="w-[13px] h-[13px] text-[#333]" fill="#fff" strokeWidth={1.5} />
        </span>
        <div className="w-[1px] shrink-0" />
        <I n="panSel" /><I n="zoomIn" /><I n="zoomOut" /><I n="zoomFull" /><I n="zoomLayer" /><I n="zoomSel" /><I n="zoomOff" /><I n="zoomLast" /><I n="zoomOff" />
        <I n="newMapOff" /><I n="newMapOff2" /><I n="bookmark" /><I n="bookmarks" /><I n="clock" /><I n="refresh" />
        <div className="w-[8px] shrink-0" />
        <I n="identify" /><I n="table" /><I n="gear" /><I n="sigma" /><I n="attr" /><Arrow /><I n="measure" /><Arrow /><More />
      </Bar>

      <Bar h="h-[20px]">
        <I n="dsManager" /><I n="gpkg" /><I n="vectorNew" /><I n="feather" /><I n="stack" /><I n="grid" /><I n="mesh" />
        <div className="w-[9px] shrink-0" />
        <I n="penOff" /><I n="pen" /><I n="saveOff" /><I n="lineOff" /><Arrow />
        <div className="w-[1px] shrink-0" />
        <I n="polyOff" /><I n="nodeOff" /><Arrow /><I n="blockOff" /><I n="trash" /><I n="cut" /><I n="copy" /><I n="paste" /><I n="undo" /><I n="redo" />
        <div className="w-[8px] shrink-0" />
        <I n="abc" /><I n="tag" />
        <div className="w-[14px] shrink-0" />
        <More />
        <div className="w-[6px] shrink-0" />
        <I n="globe" />
        <div className="w-[8px] shrink-0" />
        <I n="python" /><More />
        <div className="w-[6px] shrink-0" />
        <I n="help" />
      </Bar>

      <Bar h="h-[19px]">
        <I n="selRect" /><Arrow /><I n="selAll" /><Arrow />
        <div className="w-[1px] shrink-0" />
        <I n="selClear" /><Arrow /><I n="selPin" /><Arrow />
        <div className="w-[5px] shrink-0" />
        <I n="digOff" /><Arrow />
        <div className="w-[2px] shrink-0" />
        <I n="digOff2" /><Arrow />
        <div className="w-[2px] shrink-0" />
        <I n="digOff3" /><I n="digOff4" /><Arrow />
        <div className="w-[8px] shrink-0" />
        <I n="labelA" /><Arrow /><I n="arrowSel" /><I n="polyNode" /><I n="lineNode" /><I n="star" /><I n="textT" /><I n="dotsT" /><I n="textBox" /><I n="image" />
        <div className="w-[5px] shrink-0" />
        <I n="bubble" /><Arrow />
        <div className="w-[8px] shrink-0" />
        <I n="chip" /><I n="crossOff" />
        <div className="w-[3px] shrink-0" />
        <I n="sel3d" />
        <div className="w-[1px] shrink-0" />
        <I n="cloneOff" /><I n="blob" /><I n="wandOff" />
        <div className="w-[12px] shrink-0" />
        <More />
      </Bar>

      <div className="flex-1 min-h-0 flex">
        <div className="w-[149px] shrink-0 flex flex-col mr-[3px] border-r border-[#d8d8d8]">
          <Browser />
          <LayersPanel />
        </div>
        <MapCanvas />
      </div>
      <StatusBar />
    </div>
  )
}
